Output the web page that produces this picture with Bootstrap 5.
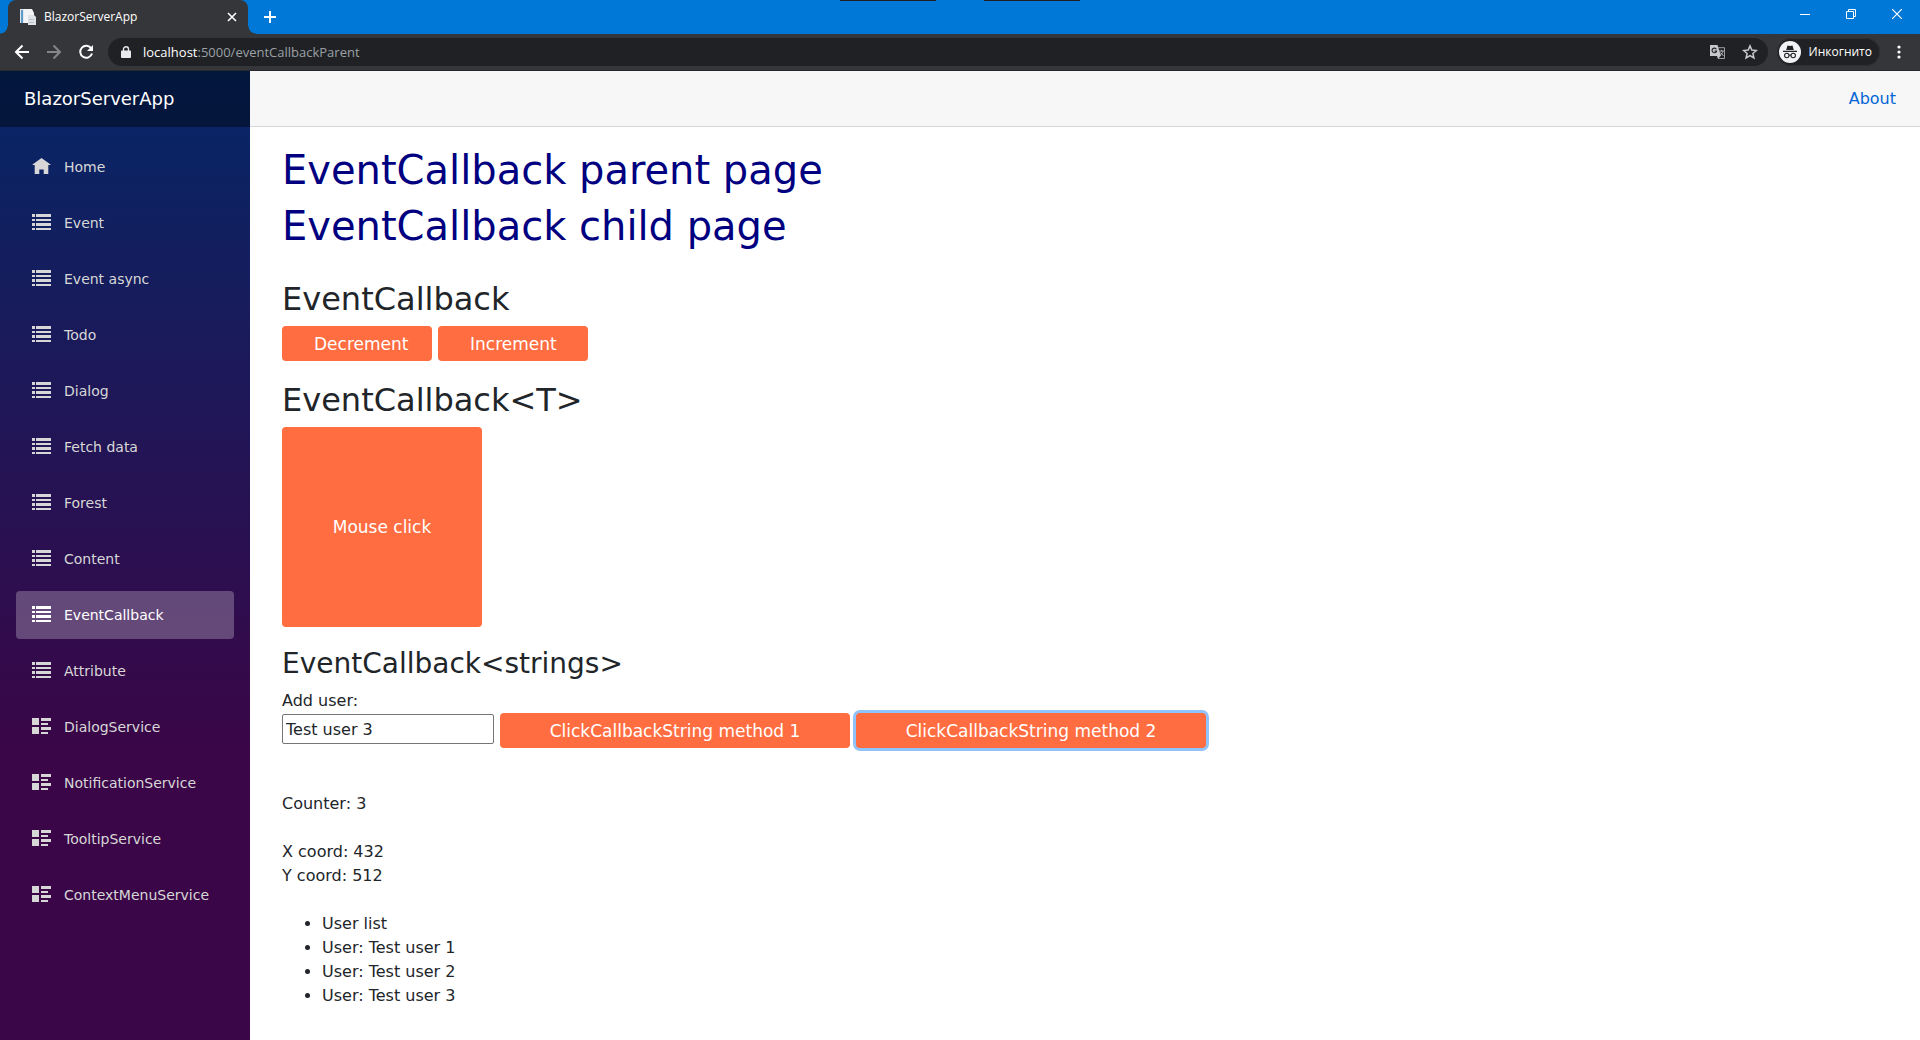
<!DOCTYPE html>
<html lang="ru">
<head>
<meta charset="utf-8">
<meta name="viewport" content="width=device-width, initial-scale=1">
<title>BlazorServerApp</title>
<link rel="stylesheet" href="https://cdn.jsdelivr.net/npm/bootstrap@5.3.0/dist/css/bootstrap.min.css">
<style>
  body { font-family: "DejaVu Sans", Verdana, sans-serif; font-size: 16px; line-height: 24px; color: #212529; }
  .chrome { font-family: "Open Sans", "Segoe UI", sans-serif; font-size: 12px; line-height: 16px; color: #fff; }
  .chrome button { background: none; border: 0; padding: 0; color: inherit; display: flex; align-items: center; justify-content: center; }
  .tabstrip { background: #0078d7; height: 34px; padding-left: 8px; }
  .browser-tab { background: #35363a; width: 240px; border-radius: 8px 8px 0 0; padding: 0 11px 0 12px; }
  .tab-foot { width: 8px; height: 8px; }
  .tab-foot-left { left: -8px; background: radial-gradient(circle at 0 0, transparent 7px, #35363a 8px); }
  .tab-foot-right { right: -8px; background: radial-gradient(circle at 100% 0, transparent 7px, #35363a 8px); }
  .new-tab { width: 44px; }
  .win-btn { width: 46px; height: 28px; }
  .edge-marks { left: 840px; top: 0; gap: 48px; }
  .edge-marks span { width: 96px; height: 1px; background: #202124; }
  .toolbar { background: #35363a; height: 37px; border-bottom: 1px solid #28292c; padding: 0 13px 0 14px; }
  .tool-icons { gap: 16px; width: 94px; }
  .omnibox { background: #202124; border-radius: 14px; height: 28px; padding: 0 10px 0 13px; }
  .address { font-size: 13px; color: #9aa0a6; }
  .address b { font-weight: 400; color: #fff; }
  .chrome .profile { background: #202124; height: 28px; border-radius: 14px; padding: 0 8px 0 2px; margin: 0 11px 0 9px; box-shadow: inset 0 0 0 1px #2f3034; }
  .sidebar { width: 250px; background: linear-gradient(180deg, #052767 0%, #3a0647 70%); }
  .brand-row { height: 56px; background: rgba(0, 0, 0, .4); padding-left: 24px; }
  .brand-row a { font-size: 18px; color: #fff; text-decoration: none; }
  .side-nav { padding: 16px; gap: 8px; }
  .side-nav .nav-link { height: 48px; font-size: 14px; color: #d7d7d7; border-radius: 4px; padding: 0 16px; gap: 13px; }
  .side-nav .nav-link.active { background: rgba(255, 255, 255, .25); color: #fff; }
  .side-nav svg { width: 19px; height: 16px; margin-bottom: 2px; }
  .top-row { height: 56px; background: #f7f7f7; border-bottom: 1px solid #d6d5d5; padding-right: 24px; }
  .top-row a { color: #0366d6; text-decoration: none; }
  .content-area { padding: 19px 32px 8px; }
  h1 { font-size: 40px; line-height: 48px; color: navy; margin-bottom: 8px; }
  h2 { font-size: 32px; line-height: 38px; margin-bottom: 8px; }
  h3 { font-size: 28px; line-height: 34px; margin-bottom: 8px; }
  h1, h2, h3 { font-weight: 400; }
  .act { background: #ff6d41; color: #fff; border: 0; border-radius: 4px; height: 35px; padding: 0; font-size: 17px; }
  .act-count { width: 150px; text-align: left; padding-left: 32px; }
  .act-square { width: 200px; height: 200px; }
  .act-wide { width: 350px; }
  .act-focused { box-shadow: 0 0 0 3px #91c4fb; outline: 0; }
  .user-name { width: 212px; height: 30px; border: 1px solid #767676; border-radius: 2px; padding: 0 3px; color: #212529; margin-top: 1px; }
  .pair { gap: 6px; }
  .block-gap { margin-top: 20px; }
  .first-block { margin-top: 30px; }
  .readout { margin-top: 44px; }
  .user-list { padding-left: 40px; }
</style>
</head>
<body class="d-flex flex-column min-vh-100">
<header class="chrome">
  <div class="tabstrip d-flex position-relative">
    <div class="edge-marks position-absolute d-flex"><span></span><span></span></div>
    <div class="browser-tab position-relative d-flex align-items-center gap-2">
      <i class="tab-foot tab-foot-left position-absolute bottom-0"></i>
      <svg width="16" height="16" viewBox="0 0 16 16" aria-hidden="true"><path fill="#dfe5ea" d="M0 0h11v14H0z"/><path fill="#5b9bc9" d="M1 1h2v13H1z"/><path fill="#f2f4f6" d="M4 0h8l2 4v10H4z"/><path fill="#dfe3e7" d="M8 6h6l2 2v8H8z"/><path stroke="#b9c1c9" d="M9 10.500h5M9 13.500h5"/></svg>
      <span class="flex-grow-1">BlazorServerApp</span>
      <button type="button" aria-label="Закрыть вкладку"><svg width="10" height="10" viewBox="0 0 10 10"><path d="M1 1l8 8M9 1L1 9" stroke="#fff" stroke-width="1.600"/></svg></button>
      <i class="tab-foot tab-foot-right position-absolute bottom-0"></i>
    </div>
    <button type="button" class="new-tab" aria-label="Новая вкладка"><svg width="12" height="12" viewBox="0 0 12 12"><path d="M6 0v12M0 6h12" stroke="#fff" stroke-width="2"/></svg></button>
    <div class="d-flex ms-auto">
      <button type="button" class="win-btn" aria-label="Свернуть"><svg width="10" height="10" viewBox="0 0 10 10"><path d="M0 5.500h10" stroke="#fff"/></svg></button>
      <button type="button" class="win-btn" aria-label="Восстановить"><svg width="10" height="10" viewBox="0 0 10 10"><path d="M.5 2.500h7v7h-7zM2.500 2.500v-2h7v7h-2" fill="none" stroke="#fff"/></svg></button>
      <button type="button" class="win-btn" aria-label="Закрыть"><svg width="10" height="10" viewBox="0 0 10 10"><path d="M0 0l10 10M10 0L0 10" stroke="#fff" stroke-width="1.200"/></svg></button>
    </div>
  </div>
  <div class="toolbar d-flex align-items-center">
    <div class="tool-icons d-flex">
      <button type="button" aria-label="Назад"><svg width="16" height="16" viewBox="0 0 16 16"><path d="M15 8H2.500M8.500 1.500L2 8l6.500 6.500" fill="none" stroke="#fff" stroke-width="2"/></svg></button>
      <button type="button" aria-label="Вперёд"><svg width="16" height="16" viewBox="0 0 16 16"><path d="M1 8h12.500M7.500 1.500L14 8l-6.500 6.500" fill="none" stroke="#85868a" stroke-width="2"/></svg></button>
      <button type="button" aria-label="Обновить"><svg width="16" height="16" viewBox="0 0 16 16"><path d="M13.300 4.500A6 6 0 1 0 14 9.500" fill="none" stroke="#fff" stroke-width="2"/><path d="M15 1v6H9z" fill="#fff"/></svg></button>
    </div>
    <div class="omnibox flex-grow-1 d-flex align-items-center">
      <svg width="10" height="12" viewBox="0 0 10 12" aria-hidden="true"><path d="M1 4.500h8a1 1 0 0 1 1 1V11a1 1 0 0 1-1 1H1a1 1 0 0 1-1-1V5.500a1 1 0 0 1 1-1z" fill="#e8eaed"/><path d="M2.500 5V3.200a2.500 2.500 0 0 1 5 0V5" fill="none" stroke="#e8eaed" stroke-width="1.400"/></svg>
      <div class="address flex-grow-1 ms-2 ps-1" role="textbox" aria-label="Адрес"><b>localhost</b>:5000/eventCallbackParent</div>
      <div class="d-flex align-items-center gap-3">
        <button type="button" aria-label="Перевести"><svg width="16" height="16" viewBox="0 0 16 16"><path d="M6.500 3.700h8v10.800H8.200" fill="none" stroke="#9b9da0"/><path d="M0 1h7.500L11 12H0z" fill="#c6c8ca"/><path d="M6.400 5.300A2.300 2.300 0 1 0 6.600 7H4.400" fill="none" stroke="#202124" stroke-width="1.100"/><path d="M9.300 7h4.500M11.500 6v1M13 7c-.3 2-1.500 3.500-3 4.500M10.500 8.500l3 3.500" fill="none" stroke="#b4b6b8"/><path d="M7 12h3.500l-2.500 3z" fill="#c6c8ca"/></svg></button>
        <button type="button" aria-label="Добавить в закладки"><svg width="16" height="16" viewBox="0 0 16 16"><path d="M8 1.900l1.800 4.200 4.600.4-3.500 3 1 4.500L8 11.600 4.100 14l1-4.500-3.500-3 4.600-.4z" fill="none" stroke="#c8cacc" stroke-width="1.500"/></svg></button>
      </div>
    </div>
    <button type="button" class="profile"><svg class="me-2" width="22" height="22" viewBox="0 0 22 22" aria-hidden="true"><circle cx="11" cy="11" r="11" fill="#f1f3f4"/><path d="M7.200 9l1.300-4.600 2.500.6 2.500-.6L14.800 9zM4 9.700h14v1.300H4z" fill="#202124"/><circle cx="7.800" cy="14.500" r="2.200" fill="none" stroke="#202124" stroke-width="1.100"/><circle cx="14.200" cy="14.500" r="2.200" fill="none" stroke="#202124" stroke-width="1.100"/><path d="M10 14.300q1-.7 2 0" fill="none" stroke="#202124"/></svg>Инкогнито</button>
    <button type="button" aria-label="Меню"><svg width="16" height="16" viewBox="0 0 16 16"><g fill="#fff"><circle cx="8" cy="3" r="1.600"/><circle cx="8" cy="8" r="1.600"/><circle cx="8" cy="13" r="1.600"/></g></svg></button>
  </div>
</header>

<svg class="d-none" aria-hidden="true">
  <symbol id="i-home" viewBox="0 0 18 16"><path d="M9 0L0 6.500V7h2.200v9h4.600v-4.600h4.400V16h4.600V7H18v-.5z" fill="currentColor"/></symbol>
  <symbol id="i-list" viewBox="0 0 19 16"><path d="M0 0h3v3H0zM4 0h15v3H4zM0 5h3v2H0zM4 5h15v2H4zM0 9h3v3H0zM4 9h15v3H4zM0 14h3v2H0zM4 14h15v2H4z" fill="currentColor"/></symbol>
  <symbol id="i-rich" viewBox="0 0 19 16"><path d="M0 0h7v7H0zM9 0h10v3H9zM9 5h7v2H9zM0 9h7v7H0zM9 9h10v3H9zM9 14h7v2H9z" fill="currentColor"/></symbol>
</svg>

<div class="d-flex flex-grow-1">
  <aside class="sidebar flex-shrink-0">
    <div class="brand-row d-flex align-items-center"><a href="#">BlazorServerApp</a></div>
    <nav class="side-nav nav flex-column">
      <a class="nav-link d-flex align-items-center" href="#"><svg><use href="#i-home"/></svg>Home</a>
      <a class="nav-link d-flex align-items-center" href="#"><svg><use href="#i-list"/></svg>Event</a>
      <a class="nav-link d-flex align-items-center" href="#"><svg><use href="#i-list"/></svg>Event async</a>
      <a class="nav-link d-flex align-items-center" href="#"><svg><use href="#i-list"/></svg>Todo</a>
      <a class="nav-link d-flex align-items-center" href="#"><svg><use href="#i-list"/></svg>Dialog</a>
      <a class="nav-link d-flex align-items-center" href="#"><svg><use href="#i-list"/></svg>Fetch data</a>
      <a class="nav-link d-flex align-items-center" href="#"><svg><use href="#i-list"/></svg>Forest</a>
      <a class="nav-link d-flex align-items-center" href="#"><svg><use href="#i-list"/></svg>Content</a>
      <a class="nav-link d-flex align-items-center active" aria-current="page" href="#"><svg><use href="#i-list"/></svg>EventCallback</a>
      <a class="nav-link d-flex align-items-center" href="#"><svg><use href="#i-list"/></svg>Attribute</a>
      <a class="nav-link d-flex align-items-center" href="#"><svg><use href="#i-rich"/></svg>DialogService</a>
      <a class="nav-link d-flex align-items-center" href="#"><svg><use href="#i-rich"/></svg>NotificationService</a>
      <a class="nav-link d-flex align-items-center" href="#"><svg><use href="#i-rich"/></svg>TooltipService</a>
      <a class="nav-link d-flex align-items-center" href="#"><svg><use href="#i-rich"/></svg>ContextMenuService</a>
    </nav>
  </aside>
  <div class="flex-grow-1">
    <div class="top-row d-flex align-items-center justify-content-end"><a href="#">About</a></div>
    <main class="content-area">
      <h1>EventCallback parent page</h1>
      <h1>EventCallback child page</h1>
      <section class="first-block">
        <h2>EventCallback</h2>
        <div class="pair d-flex">
          <button type="button" class="act act-count">Decrement</button>
          <button type="button" class="act act-count">Increment</button>
        </div>
      </section>
      <section class="block-gap">
        <h2>EventCallback&lt;T&gt;</h2>
        <button type="button" class="act act-square d-block">Mouse click</button>
      </section>
      <section class="block-gap">
        <h3>EventCallback&lt;strings&gt;</h3>
        <label class="d-block" for="user-name">Add user:</label>
        <div class="pair d-flex align-items-start">
          <input id="user-name" class="user-name" type="text" value="Test user 3">
          <button type="button" class="act act-wide">ClickCallbackString method 1</button>
          <button type="button" class="act act-wide act-focused">ClickCallbackString method 2</button>
        </div>
      </section>
      <div class="readout">Counter: 3</div>
      <div class="mt-4">X coord: 432</div>
      <div>Y coord: 512</div>
      <ul class="user-list mt-4 mb-0">
        <li>User list</li>
        <li>User: Test user 1</li>
        <li>User: Test user 2</li>
        <li>User: Test user 3</li>
      </ul>
    </main>
  </div>
</div>
<script src="https://cdn.jsdelivr.net/npm/bootstrap@5.3.0/dist/js/bootstrap.bundle.min.js"></script>
</body>
</html>
